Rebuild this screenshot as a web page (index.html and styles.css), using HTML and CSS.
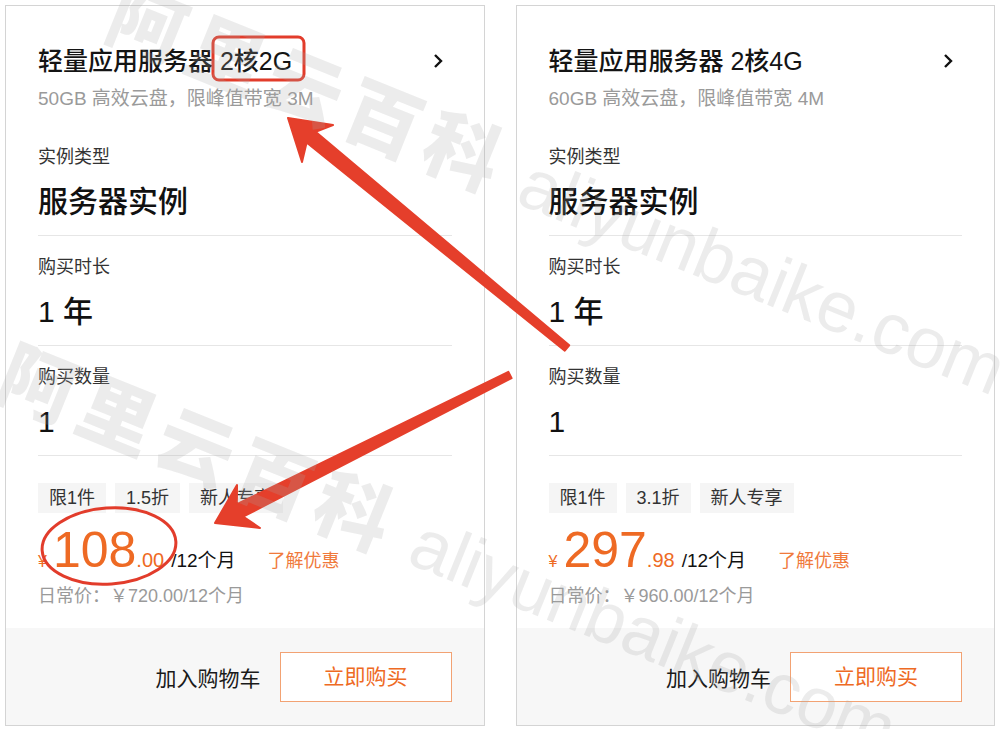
FILE: index.html
```html
<!doctype html>
<html>
<head>
<meta charset="utf-8">
<title>轻量应用服务器</title>
<link rel="stylesheet" href="styles.css">
</head>
<body>
<div class="screen">
<div class="page">

  <div class="card">
    <div class="head">
      <div class="title-row">
        <h2 class="title">轻量应用服务器 2核2G</h2>
        <svg class="chev" width="16" height="16" viewBox="0 0 16 16"><polyline points="5,2 11,8 5,14" fill="none" stroke="#111" stroke-width="2.4"/></svg>
      </div>
      <p class="sub">50GB 高效云盘，限峰值带宽 3M</p>
    </div>
    <div class="sec">
      <p class="label">实例类型</p>
      <p class="value">服务器实例</p>
    </div>
    <div class="sec">
      <p class="label">购买时长</p>
      <p class="value">1 年</p>
    </div>
    <div class="sec">
      <p class="label">购买数量</p>
      <p class="value">1</p>
    </div>
    <div class="pricebox">
      <div class="tags"><span>限1件</span><span>1.5折</span><span>新人专享</span></div>
      <div class="price">
        <span class="yen">¥</span><span class="big">108</span><span class="dec">.00</span><span class="per">/12个月</span><a class="more" href="#">了解优惠</a>
      </div>
      <p class="old">日常价：￥720.00/12个月</p>
    </div>
    <div class="foot">
      <a class="cart" href="#">加入购物车</a>
      <a class="buy" href="#">立即购买</a>
    </div>
  </div>

  <div class="card">
    <div class="head">
      <div class="title-row">
        <h2 class="title">轻量应用服务器 2核4G</h2>
        <svg class="chev" width="16" height="16" viewBox="0 0 16 16"><polyline points="5,2 11,8 5,14" fill="none" stroke="#111" stroke-width="2.4"/></svg>
      </div>
      <p class="sub">60GB 高效云盘，限峰值带宽 4M</p>
    </div>
    <div class="sec">
      <p class="label">实例类型</p>
      <p class="value">服务器实例</p>
    </div>
    <div class="sec">
      <p class="label">购买时长</p>
      <p class="value">1 年</p>
    </div>
    <div class="sec">
      <p class="label">购买数量</p>
      <p class="value">1</p>
    </div>
    <div class="pricebox">
      <div class="tags"><span>限1件</span><span>3.1折</span><span>新人专享</span></div>
      <div class="price">
        <span class="yen">¥</span><span class="big">297</span><span class="dec">.98</span><span class="per">/12个月</span><a class="more" href="#">了解优惠</a>
      </div>
      <p class="old">日常价：￥960.00/12个月</p>
    </div>
    <div class="foot">
      <a class="cart" href="#">加入购物车</a>
      <a class="buy" href="#">立即购买</a>
    </div>
  </div>

</div>

<!-- annotations drawn over the screenshot -->
<svg class="marks" width="1000" height="729" viewBox="0 0 1000 729">
  <rect x="213" y="37" width="91" height="43" rx="6" fill="none" stroke="#e23c2b" stroke-width="3"/>
  <ellipse cx="109" cy="546" rx="67" ry="38" fill="none" stroke="#e23c2b" stroke-width="3" transform="rotate(-4 109 546)"/>
  <polygon points="288,118 333,125 315.6,131.7 569.2,345.3 564.8,350.7 306.6,142.5 302,162" fill="#e53f2b" stroke="#e53f2b" stroke-width="2" stroke-linejoin="round"/>
  <polygon points="215,523 237,485 236.9,504.1 508.4,371.9 511.6,378.1 243.1,516.7 260,528" fill="#e53f2b" stroke="#e53f2b" stroke-width="2" stroke-linejoin="round"/>
</svg>

<div class="wm wm1"><b>阿里云百科</b> aliyunbaike.com</div>
<div class="wm wm2"><b>阿里云百科</b> aliyunbaike.com</div>
</div>
</body>
</html>
```

FILE: styles.css
```css
* {padding:0;margin:0;box-sizing:border-box;}
body {
	font-family:"Liberation Sans","Noto Sans CJK SC",sans-serif;
	color:#222;
	background:#fff;
}
.screen {
	width:1000px;
	height:729px;
	overflow:hidden;
	position:relative;
}
a {text-decoration:none;}
.page {
	display:flex;
	gap:31px;
	padding:5px;
}
.card {
	width:480px;
	height:721px;
	border:1px solid #d4d4d4;
	display:flex;
	flex-direction:column;
}
.head {
	padding:38px 32px 15px 32px;
}
.title-row {
	display:flex;
	align-items:center;
	justify-content:space-between;
}
.title {
	font-size:25px;
	font-weight:500;
	line-height:34px;
	color:#141414;
}
.chev {margin-right:6px;}
.sub {
	margin-top:9px;
	font-size:19px;
	line-height:24px;
	color:#9a9a9a;
}
.sec {
	margin:0 32px;
	padding:18px 0 13px;
	border-bottom:1px solid #e6e6e6;
}
.label {
	font-size:18px;
	line-height:26px;
	color:#333;
}
.value {
	margin-top:12px;
	font-size:30px;
	line-height:40px;
	font-weight:500;
	color:#111;
}
.pricebox {
	padding:27px 32px 19px;
}
.tags {
	display:flex;
	gap:9px;
}
.tags span {
	height:30px;
	line-height:30px;
	padding:0 11px;
	background:#f5f5f5;
	font-size:18px;
	color:#333;
}
.price {
	display:flex;
	align-items:baseline;
	margin-top:12px;
	height:49px;
	color:#ee6a24;
}
.price span, .price a {line-height:1;}
.yen {font-size:16px;margin-right:6px;}
.big {font-size:50px;}
.dec {font-size:20px;margin-right:7px;}
.per {font-size:19px;color:#111;}
.more {
	margin-left:32px;
	font-size:18px;
	color:#f07a3c;
}
.old {
	margin-top:9px;
	font-size:18px;
	line-height:26px;
	color:#9a9a9a;
}
.foot {
	flex:1;
	background:#f7f7f7;
	display:flex;
	align-items:center;
	justify-content:flex-end;
	gap:19px;
	padding:0 32px;
}
.cart {
	font-size:21px;
	color:#1a1a1a;
}
.buy {
	width:172px;
	height:50px;
	line-height:48px;
	text-align:center;
	border:1px solid #f2a273;
	font-size:21px;
	color:#ee6a24;
	background:#fff;
}
.marks {
	position:absolute;
	left:0;
	top:0;
	pointer-events:none;
}
.wm {
	position:absolute;
	white-space:nowrap;
	font-size:72px;
	line-height:90px;
	color:rgba(170,170,170,0.22);
	transform-origin:0 0;
	transform:rotate(22deg);
	pointer-events:none;
}
.wm b {
	font-size:76px;
	font-weight:900;
	letter-spacing:9px;
}
.wm1 {left:128px;top:-30px;}
.wm2 {left:19px;top:330px;}
```
